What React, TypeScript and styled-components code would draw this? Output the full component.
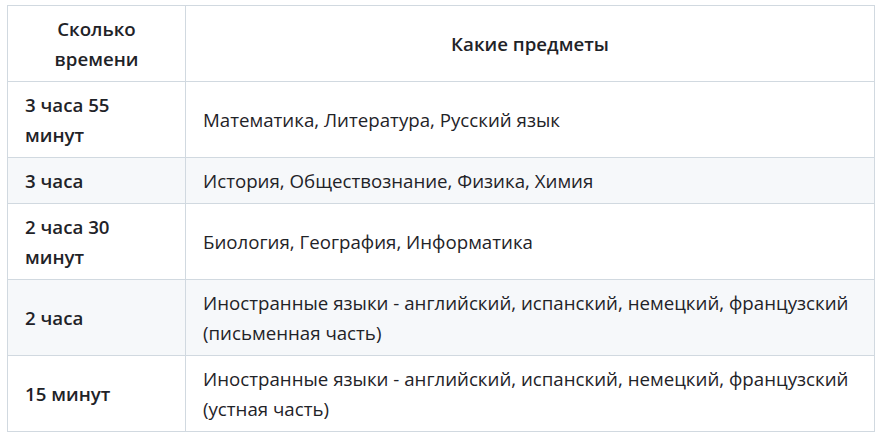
import React from "react";
import styled, { createGlobalStyle } from "styled-components";

const Global = createGlobalStyle`
  html, body { margin: 0; padding: 0; background: #ffffff; }
  body { padding: 5px 14px 0 7px; font-family: "Open Sans", "Noto Sans", sans-serif; color: #1f2328; }
`;

const Table = styled.table`
  border-collapse: collapse;
  table-layout: fixed;
  width: 868px;
  font-size: 18.7px;
  line-height: 30px;
`;

const Col = styled.col<{ $w?: number }>`
  width: ${(p) => (p.$w ? `${p.$w}px` : "auto")};
`;

const HeadCell = styled.th`
  border: 1px solid #d1d9e0;
  padding: 8px 17px 7px;
  font-weight: 600;
  text-align: center;
`;

const Row = styled.tr<{ $striped?: boolean }>`
  background: ${(p) => (p.$striped ? "#f6f8fa" : "#ffffff")};
`;

const TimeCell = styled.td`
  border: 1px solid #d1d9e0;
  padding: 8px 17px 7px;
  font-weight: 600;
  text-align: left;
`;

const SubjectCell = styled.td`
  border: 1px solid #d1d9e0;
  padding: 8px 17px 7px;
  text-align: left;
`;

const rows = [
  { time: "3 часа 55 минут", subjects: "Математика, Литература, Русский язык" },
  { time: "3 часа", subjects: "История, Обществознание, Физика, Химия" },
  { time: "2 часа 30 минут", subjects: "Биология, География, Информатика" },
  {
    time: "2 часа",
    subjects:
      "Иностранные языки - английский, испанский, немецкий, французский (письменная часть)",
  },
  {
    time: "15 минут",
    subjects:
      "Иностранные языки - английский, испанский, немецкий, французский (устная часть)",
  },
];

export default function App() {
  return (
    <>
      <Global />
      <Table>
        <colgroup>
          <Col $w={178} />
          <Col />
        </colgroup>
        <thead>
          <tr>
            <HeadCell>Сколько времени</HeadCell>
            <HeadCell>Какие предметы</HeadCell>
          </tr>
        </thead>
        <tbody>
          {rows.map((r, i) => (
            <Row key={i} $striped={i % 2 === 1}>
              <TimeCell>{r.time}</TimeCell>
              <SubjectCell>{r.subjects}</SubjectCell>
            </Row>
          ))}
        </tbody>
      </Table>
    </>
  );
}
